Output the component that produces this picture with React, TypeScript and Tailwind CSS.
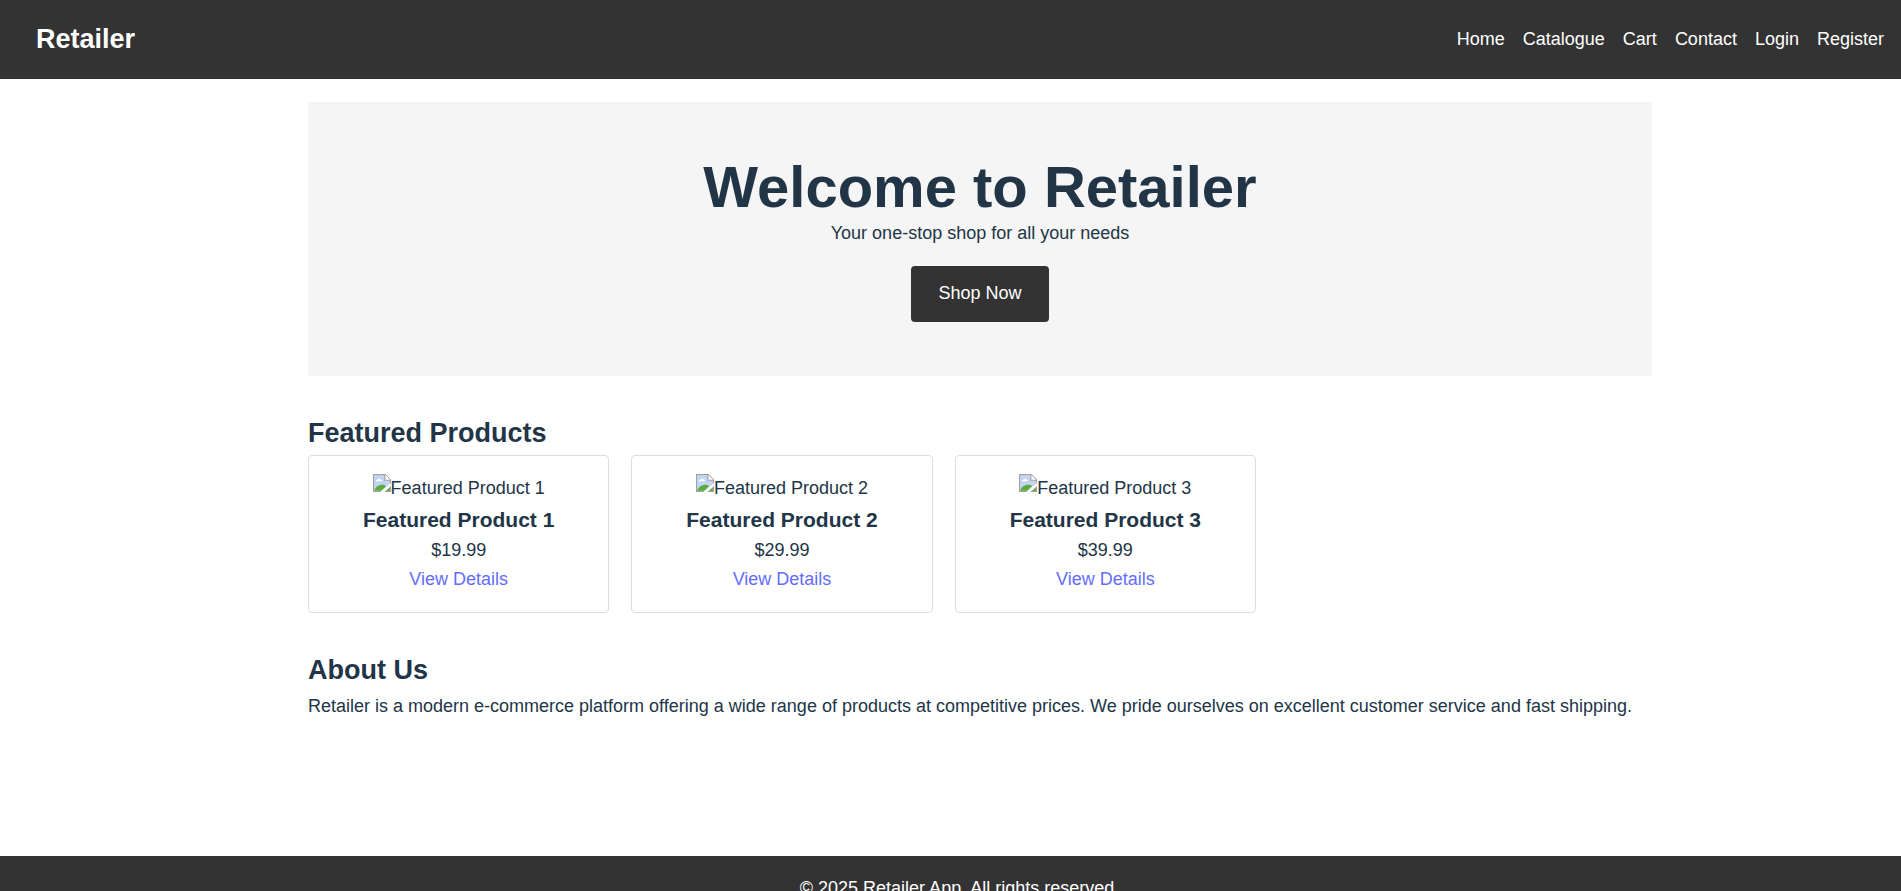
const navItems = ["Home", "Catalogue", "Cart", "Contact", "Login", "Register"];

const products = [
  { name: "Featured Product 1", price: "$19.99" },
  { name: "Featured Product 2", price: "$29.99" },
  { name: "Featured Product 3", price: "$39.99" },
];

function MissingImageIcon() {
  return (
    <svg width="18" height="18" viewBox="0 0 16 16" aria-hidden="true" className="shrink-0">
      <path d="M0.5 0.5H11L15.5 5V15.5H0.5Z" fill="#fff" />
      <path d="M1 1H11V5H15V9L7 15H1Z" fill="#c3d5f5" />
      <path d="M2.5 6.5C2.5 5.4 3.6 5 4.2 5.2C4.5 3.8 6.6 3.8 6.9 5.2C7.9 5 8.2 6.5 7.5 6.5Z" fill="#fff" />
      <path d="M1 14.8C2 11.6 5 9.6 8 9.6C9.4 9.6 10.6 10 11.6 10.8L7.4 14.8Z" fill="#5aac3b" />
      <path d="M11 15L15 11.4V15Z" fill="#5aac3b" />
      <path d="M7.6 16L15 8.6L16 8.6V10.4L10.4 16Z" fill="#fff" />
      <path d="M7 15.5H0.5V0.5H11L15.5 5V8.4" fill="none" stroke="#a0a0a0" />
      <path d="M10.5 0.5V5.5H15.5" fill="#fff" stroke="#a0a0a0" />
      <path d="M10.5 15.5H15.5V11" fill="none" stroke="#a0a0a0" />
    </svg>
  );
}

export default function App() {
  return (
    <div className="flex min-h-screen flex-col bg-white font-['Liberation_Sans',Arial,sans-serif] text-[18px] leading-[29px] text-[#213547]">
      <header className="flex items-center justify-between bg-[#333] py-[18px] pr-[17px] pl-[36px] text-white">
        <h1 className="text-[27px] leading-[43px] font-bold">Retailer</h1>
        <nav>
          <ul className="flex gap-[18px]">
            {navItems.map((item) => (
              <li key={item}>
                <a href="#">{item}</a>
              </li>
            ))}
          </ul>
        </nav>
      </header>

      <main className="mx-auto w-full max-w-[1403px] grow pt-[23px] pb-[135px] pl-[59px]">
        <section className="mb-[36px] bg-[#f5f5f5] px-[18px] pt-[53px] pb-[54px] text-center">
          <h2 className="text-[58px] leading-[64px] font-bold">Welcome to Retailer</h2>
          <p>Your one-stop shop for all your needs</p>
          <a href="#" className="mt-[18px] inline-block rounded-[4px] bg-[#333] px-[27px] pt-[13px] pb-[14px] align-top text-white">
            Shop Now
          </a>
        </section>

        <section className="mb-[36px]">
          <h2 className="text-[27px] leading-[43px] font-bold">Featured Products</h2>
          <div className="grid max-w-[948px] grid-cols-3 gap-[22px]">
            {products.map((product) => (
              <article key={product.name} className="rounded-[4px] border border-[#ddd] p-[18px] text-center">
                <div className="flex justify-center">
                  <MissingImageIcon />
                  <span>{product.name}</span>
                </div>
                <h3 className="text-[21px] leading-[33px] font-bold">{product.name}</h3>
                <p>{product.price}</p>
                <a href="#" className="text-[#646cff]">
                  View Details
                </a>
              </article>
            ))}
          </div>
        </section>

        <section>
          <h2 className="text-[27px] leading-[43px] font-bold">About Us</h2>
          <p>
            Retailer is a modern e-commerce platform offering a wide range of products at competitive prices. We pride
            ourselves on excellent customer service and fast shipping.
          </p>
        </section>
      </main>

      <footer className="bg-[#333] py-[18px] pr-[18px] pl-[36px] text-center text-white">
        <p>© 2025 Retailer App. All rights reserved.</p>
      </footer>
    </div>
  );
}
